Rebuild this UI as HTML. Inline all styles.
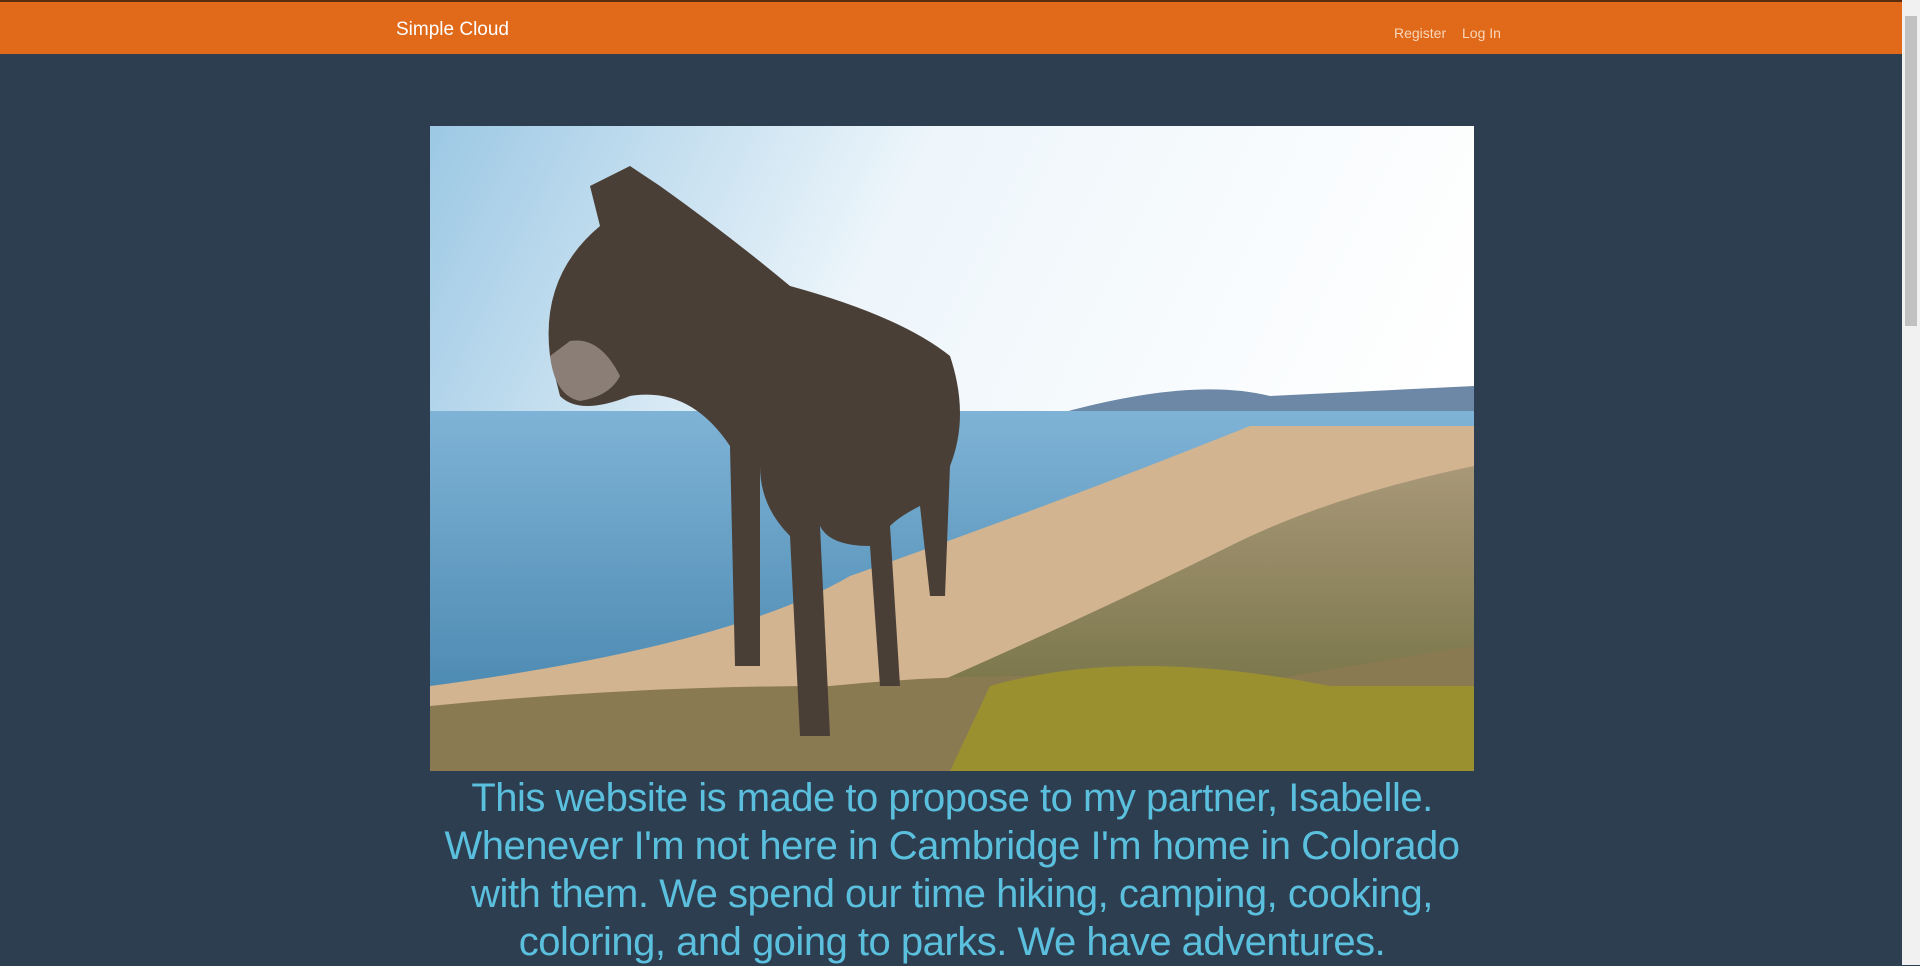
<!DOCTYPE html>
<html><head><meta charset="utf-8"><style>
html,body{margin:0;padding:0;}
body{width:1920px;height:965px;overflow:hidden;background:#2c3e50;font-family:"Liberation Sans",sans-serif;position:relative;}
.nav{position:absolute;left:0;top:0;width:1902px;height:54px;background:#e0691a;border-top:2px solid #5a2c10;box-sizing:border-box;}
.brand{position:absolute;left:396px;top:17px;color:#fff;font-size:19px;}
.links{position:absolute;top:23px;font-size:14px;color:#f8d8bc;}
.sb{position:absolute;right:0;top:0;width:18px;height:965px;background:#f1f1f1;}
.sb div{position:absolute;left:3px;top:16px;width:12px;height:310px;background:#c1c1c1;}
.img{position:absolute;left:430px;top:126px;width:1044px;height:645px;}
.txt{position:absolute;left:400px;top:774px;width:1104px;text-align:center;color:#5bc0de;font-size:40px;line-height:48px;letter-spacing:-0.5px;white-space:nowrap;}
</style></head><body>
<div class="nav"><div class="brand">Simple Cloud</div><div class="links" style="left:1394px">Register</div><div class="links" style="left:1462px">Log In</div></div>
<div class="sb"><div></div></div>
<svg class="img" viewBox="0 0 1044 645" preserveAspectRatio="none">
<defs>
<linearGradient id="sky" x1="0" y1="0" x2="1" y2="0.3"><stop offset="0" stop-color="#9cc8e4"/><stop offset="0.45" stop-color="#eef6fb"/><stop offset="1" stop-color="#ffffff"/></linearGradient>
<linearGradient id="sea" x1="0" y1="0" x2="0" y2="1"><stop offset="0" stop-color="#7fb3d6"/><stop offset="1" stop-color="#3f7fa8"/></linearGradient>
<linearGradient id="gr" x1="0" y1="0" x2="0" y2="1"><stop offset="0" stop-color="#a89878"/><stop offset="1" stop-color="#6a6a3a"/></linearGradient>
</defs>
<rect width="1044" height="645" fill="url(#sky)"/>
<path d="M620 290 Q760 250 840 270 L1044 260 L1044 330 L620 330Z" fill="#6d87a6"/>
<rect y="285" width="1044" height="360" fill="url(#sea)"/>
<path d="M1044 300 L1044 645 L0 645 L0 560 Q300 520 420 450 Q620 380 820 300Z" fill="#d2b490"/>
<path d="M1044 340 L1044 645 L300 645 Q600 520 800 420 Q900 370 1044 340Z" fill="url(#gr)"/>
<path d="M0 580 Q200 560 400 560 Q600 540 800 560 L1044 520 L1044 645 L0 645Z" fill="#8a7a52"/>
<path d="M560 560 Q700 520 900 560 L1044 560 L1044 645 L520 645Z" fill="#9a9030"/>
<path d="M120 230 Q110 150 170 100 L160 60 L200 40 L230 60 Q300 110 360 160 Q470 190 520 230 Q540 290 520 340 L515 470 L500 470 L490 380 Q470 390 460 400 L470 560 L450 560 L440 420 Q400 420 390 400 L400 610 L370 610 L360 410 Q330 380 330 340 L330 540 L305 540 L300 320 Q260 260 200 270 Q150 290 130 270Z" fill="#4a3f37"/>
<path d="M120 230 Q125 270 150 275 Q180 270 190 250 Q170 210 140 215Z" fill="#8a7e76"/>
</svg>
<div class="txt">This website is made to propose to my partner, Isabelle.<br>Whenever I'm not here in Cambridge I'm home in Colorado<br>with them. We spend our time hiking, camping, cooking,<br>coloring, and going to parks. We have adventures.</div>
</body></html>
